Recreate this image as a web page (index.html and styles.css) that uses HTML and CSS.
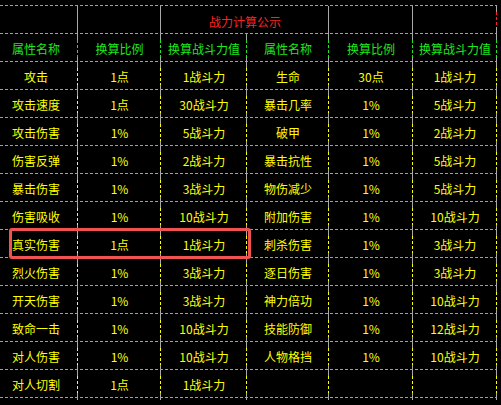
FILE: index.html
```html
<!DOCTYPE html>
<html lang="zh">
<head>
<meta charset="utf-8">
<title>战力计算公示</title>
<link rel="stylesheet" href="styles.css">
</head>
<body>
<div class="board">
  <div class="table">
    <div class="row title-row">
      <div class="cell"></div>
      <div class="cell"></div>
      <div class="cell span2"><span class="title">战力计算公示</span></div>
      <div class="cell"></div>
      <div class="cell red"><div class="v"></div></div>
    </div>
    <div class="row head">
      <div class="cell c1"><div class="v">属性名称</div></div>
      <div class="cell"><div class="v">换算比例</div></div>
      <div class="cell"><div class="v">换算战斗力值</div></div>
      <div class="cell"><div class="v">属性名称</div></div>
      <div class="cell"><div class="v">换算比例</div></div>
      <div class="cell"><div class="v">换算战斗力值</div></div>
    </div>
    <div class="row">
      <div class="cell c1"><div class="v">攻击</div></div>
      <div class="cell"><div class="v">1点</div></div>
      <div class="cell"><div class="v">1战斗力</div></div>
      <div class="cell"><div class="v">生命</div></div>
      <div class="cell"><div class="v">30点</div></div>
      <div class="cell"><div class="v">1战斗力</div></div>
    </div>
    <div class="row">
      <div class="cell c1"><div class="v">攻击速度</div></div>
      <div class="cell"><div class="v">1点</div></div>
      <div class="cell"><div class="v">30战斗力</div></div>
      <div class="cell"><div class="v">暴击几率</div></div>
      <div class="cell"><div class="v">1%</div></div>
      <div class="cell"><div class="v">5战斗力</div></div>
    </div>
    <div class="row">
      <div class="cell c1"><div class="v">攻击伤害</div></div>
      <div class="cell"><div class="v">1%</div></div>
      <div class="cell"><div class="v">5战斗力</div></div>
      <div class="cell"><div class="v">破甲</div></div>
      <div class="cell"><div class="v">1%</div></div>
      <div class="cell"><div class="v">2战斗力</div></div>
    </div>
    <div class="row">
      <div class="cell c1"><div class="v">伤害反弹</div></div>
      <div class="cell"><div class="v">1%</div></div>
      <div class="cell"><div class="v">2战斗力</div></div>
      <div class="cell"><div class="v">暴击抗性</div></div>
      <div class="cell"><div class="v">1%</div></div>
      <div class="cell"><div class="v">5战斗力</div></div>
    </div>
    <div class="row">
      <div class="cell c1"><div class="v">暴击伤害</div></div>
      <div class="cell"><div class="v">1%</div></div>
      <div class="cell"><div class="v">3战斗力</div></div>
      <div class="cell"><div class="v">物伤减少</div></div>
      <div class="cell"><div class="v">1%</div></div>
      <div class="cell"><div class="v">5战斗力</div></div>
    </div>
    <div class="row">
      <div class="cell c1"><div class="v">伤害吸收</div></div>
      <div class="cell"><div class="v">1%</div></div>
      <div class="cell"><div class="v">10战斗力</div></div>
      <div class="cell"><div class="v">附加伤害</div></div>
      <div class="cell"><div class="v">1%</div></div>
      <div class="cell"><div class="v">10战斗力</div></div>
    </div>
    <div class="row">
      <div class="cell c1"><div class="v">真实伤害</div></div>
      <div class="cell"><div class="v">1点</div></div>
      <div class="cell"><div class="v">1战斗力</div></div>
      <div class="cell"><div class="v">刺杀伤害</div></div>
      <div class="cell"><div class="v">1%</div></div>
      <div class="cell"><div class="v">3战斗力</div></div>
    </div>
    <div class="row">
      <div class="cell c1"><div class="v">烈火伤害</div></div>
      <div class="cell"><div class="v">1%</div></div>
      <div class="cell"><div class="v">3战斗力</div></div>
      <div class="cell"><div class="v">逐日伤害</div></div>
      <div class="cell"><div class="v">1%</div></div>
      <div class="cell"><div class="v">3战斗力</div></div>
    </div>
    <div class="row">
      <div class="cell c1"><div class="v">开天伤害</div></div>
      <div class="cell"><div class="v">1%</div></div>
      <div class="cell"><div class="v">3战斗力</div></div>
      <div class="cell"><div class="v">神力倍功</div></div>
      <div class="cell"><div class="v">1%</div></div>
      <div class="cell"><div class="v">10战斗力</div></div>
    </div>
    <div class="row">
      <div class="cell c1"><div class="v">致命一击</div></div>
      <div class="cell"><div class="v">1%</div></div>
      <div class="cell"><div class="v">10战斗力</div></div>
      <div class="cell"><div class="v">技能防御</div></div>
      <div class="cell"><div class="v">1%</div></div>
      <div class="cell"><div class="v">12战斗力</div></div>
    </div>
    <div class="row">
      <div class="cell c1"><div class="v">对人伤害</div></div>
      <div class="cell"><div class="v">1%</div></div>
      <div class="cell"><div class="v">10战斗力</div></div>
      <div class="cell"><div class="v">人物格挡</div></div>
      <div class="cell"><div class="v">1%</div></div>
      <div class="cell"><div class="v">10战斗力</div></div>
    </div>
    <div class="row">
      <div class="cell c1"><div class="v">对人切割</div></div>
      <div class="cell"><div class="v">1点</div></div>
      <div class="cell"><div class="v">1战斗力</div></div>
      <div class="cell"><div class="v"></div></div>
      <div class="cell"><div class="v"></div></div>
      <div class="cell"><div class="v"></div></div>
    </div>
  </div>
  <div class="highlight"></div>
</div>
</body>
</html>
```
FILE: styles.css
```css
html, body {
  margin: 0;
  padding: 0;
  background: #000;
}

body {
  font-family: "Noto Sans CJK SC", "Noto Sans", sans-serif;
  font-size: 12px;
  color: #ffff00;
}

.board {
  position: relative;
  width: 501px;
  height: 405px;
  padding-top: 5px;
  box-sizing: border-box;
}

.table {
  width: 497px;
  padding-top: 1px;
  background-image: repeating-linear-gradient(90deg, #a0a0a0 0 3px, transparent 3px 5px);
  background-size: 100% 1px;
  background-position: left top;
  background-repeat: no-repeat;
}

.row {
  display: grid;
  grid-template-columns: 78px 83px 86px 82px 84px 84px;
  height: 28px;
  background-image: repeating-linear-gradient(90deg, #a0a0a0 0 3px, transparent 3px 5px);
  background-size: 100% 1px;
  background-position: left bottom;
  background-repeat: no-repeat;
}

.cell {
  display: flex;
  padding: 6px 0 7px;
  background-image: linear-gradient(#a8a8a8, #a8a8a8);
  background-size: 1px 100%;
  background-position: right top;
  background-repeat: no-repeat;
}

.v {
  flex: 1;
  display: flex;
  align-items: center;
  justify-content: center;
  white-space: nowrap;
  background-color: #000;
  background-image: repeating-linear-gradient(180deg, currentColor 0 3px, transparent 3px 5px);
  background-size: 1px 100%;
  background-position: right top;
  background-repeat: no-repeat;
}

.c1 .v {
  padding-right: 6px;
}

.head {
  color: #1ee81e;
}

.title-row .span2 {
  grid-column: span 2;
  align-items: center;
  justify-content: center;
  padding: 0;
}

.title {
  color: #ff2222;
  position: relative;
  top: 1px;
}

.title-row .red {
  color: #ff2222;
}

.highlight {
  position: absolute;
  left: 9px;
  top: 228px;
  width: 242px;
  height: 31px;
  box-sizing: border-box;
  border: 3px solid #f05252;
  border-radius: 3px;
}
```
